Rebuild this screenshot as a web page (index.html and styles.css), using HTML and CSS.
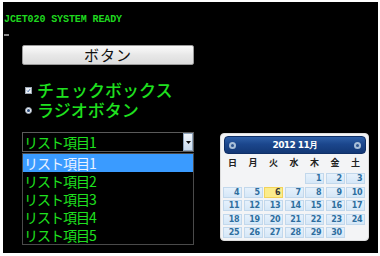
FILE: index.html
```html
<!DOCTYPE html>
<html lang="ja">
<head>
<meta charset="utf-8">
<title>JCET020</title>
<link rel="stylesheet" href="styles.css">
</head>
<body>
<main class="screen">
  <div class="status">JCET020 SYSTEM READY</div>
  <div class="cursor"></div>
  <button class="btn" type="button">ボタン</button>
  <div class="checks">
    <label class="opt">
      <span class="cbox"><svg width="7" height="7" viewBox="0 0 7 7"><path d="M1.5 3.6 L3 5.2 L5.6 1.6" fill="none" stroke="#2a5a9a" stroke-width="1.2"/></svg></span>
      <span class="opt-text">チェックボックス</span>
    </label>
    <label class="opt">
      <span class="rbox"><span class="rdot"></span></span>
      <span class="opt-text">ラジオボタン</span>
    </label>
  </div>
  <div class="lower">
    <div class="combo">
      <div class="select">
        <span class="select-text">リスト項目1</span>
        <span class="select-arrow"><svg width="5" height="3" viewBox="0 0 5 3"><path d="M0 0 H5 L2.5 3 Z" fill="#111"/></svg></span>
      </div>
      <ul class="list">
        <li class="item active">リスト項目1</li>
        <li class="item">リスト項目2</li>
        <li class="item">リスト項目3</li>
        <li class="item">リスト項目4</li>
        <li class="item">リスト項目5</li>
      </ul>
    </div>
    <div class="cal">
      <div class="cal-head">
        <span class="cal-nav"><span class="cal-nav-dot"></span></span>
        <span class="cal-title">2012 11月</span>
        <span class="cal-nav"><span class="cal-nav-dot"></span></span>
      </div>
      <div class="cal-days">
        <span>日</span><span>月</span><span>火</span><span>水</span><span>木</span><span>金</span><span>土</span>
      </div>
      <div class="cal-grid">
        <span class="empty"></span><span class="empty"></span><span class="empty"></span><span class="empty"></span>
        <span class="d">1</span><span class="d">2</span><span class="d">3</span>
        <span class="d">4</span><span class="d">5</span><span class="d today">6</span><span class="d">7</span><span class="d">8</span><span class="d">9</span><span class="d">10</span>
        <span class="d">11</span><span class="d">12</span><span class="d">13</span><span class="d">14</span><span class="d">15</span><span class="d">16</span><span class="d">17</span>
        <span class="d">18</span><span class="d">19</span><span class="d">20</span><span class="d">21</span><span class="d">22</span><span class="d">23</span><span class="d">24</span>
        <span class="d">25</span><span class="d">26</span><span class="d">27</span><span class="d">28</span><span class="d">29</span><span class="d">30</span><span class="empty"></span>
      </div>
    </div>
  </div>
</main>
</body>
</html>
```

FILE: styles.css
```css
html, body {
  margin: 0;
  padding: 0;
  background: #ffffff;
}
body {
  width: 380px;
  height: 256px;
  overflow: hidden;
  font-family: "Noto Sans CJK JP", "Noto Sans", sans-serif;
}
.screen {
  display: block;
  margin: 2px 2px 0 3px;
  height: 251px;
  background: #000000;
  overflow: hidden;
}
.status {
  padding-top: 12px;
  margin-left: 1px;
  height: 12px;
  line-height: 12px;
  font-family: "Liberation Mono", monospace;
  font-weight: bold;
  font-size: 10px;
  color: #1fd81f;
  letter-spacing: -0.1px;
}
.cursor {
  margin: 8px 0 0 1px;
  width: 5px;
  height: 2px;
  background: #8a8a8a;
}
.btn {
  display: block;
  margin: 9px 0 0 19px;
  width: 172px;
  height: 20px;
  box-sizing: border-box;
  padding: 0;
  border: 1px solid #9a9a9a;
  border-radius: 2px;
  background: linear-gradient(#fbfbfb, #e8e8e8 50%, #dcdcdc);
  font-family: "Noto Sans CJK JP", sans-serif;
  font-size: 15px;
  line-height: 18px;
  color: #111;
  letter-spacing: 1px;
}
.checks {
  margin-top: 15px;
  margin-left: 22px;
}
.opt {
  display: flex;
  align-items: center;
  height: 20px;
}
.cbox {
  width: 7px;
  height: 7px;
  box-sizing: border-box;
  border: 1px solid #9aa4b0;
  background: #eef2f8;
  display: flex;
  align-items: center;
  justify-content: center;
  overflow: hidden;
}
.cbox svg { display: block; }
.rbox {
  width: 7px;
  height: 7px;
  box-sizing: border-box;
  border: 1px solid #9aa4b0;
  border-radius: 50%;
  background: #eef2f8;
  display: flex;
  align-items: center;
  justify-content: center;
}
.rdot {
  width: 3px;
  height: 3px;
  border-radius: 50%;
  background: #2a4a7a;
}
.opt-text {
  margin-left: 5px;
  font-size: 17px;
  line-height: 20px;
  color: #1fe01f;
  font-weight: 500;
}
.lower {
  display: flex;
  align-items: flex-start;
  margin-top: 12px;
}
.combo {
  margin-left: 19px;
  width: 172px;
}
.select {
  height: 20px;
  box-sizing: border-box;
  border: 1px solid #5a5a5a;
  background: #000;
  display: flex;
  align-items: center;
  justify-content: space-between;
}
.select-text, .item {
  font-size: 14px;
  letter-spacing: -1px;
  color: #1fe01f;
  padding-left: 1px;
}
.select-text { line-height: 18px; }
.select-arrow {
  width: 10px;
  height: 18px;
  box-sizing: border-box;
  border: 1px solid #8ea4bc;
  background: linear-gradient(#f2f6fb, #c9dcef);
  display: flex;
  align-items: center;
  justify-content: center;
}
.select-arrow svg { display: block; }
.list {
  list-style: none;
  margin: 1px 0 0;
  padding: 0;
  box-sizing: border-box;
  border: 1px solid #4a4a4a;
  background: #000;
}
.item {
  height: 18px;
  line-height: 18px;
}
.item.active {
  background: #3a9bff;
  color: #eaf2ff;
}
.cal {
  margin: 1px 0 0 26px;
  width: 149px;
  box-sizing: border-box;
  padding: 2px;
  border: 1px solid #dcdcdc;
  border-radius: 4px;
  background: #f3f4f6;
}
.cal-head {
  height: 18px;
  margin: 0 0 0 1px;
  width: 142px;
  box-sizing: border-box;
  border-radius: 4px;
  border: 1px solid #0f2f66;
  background: linear-gradient(#2f60a8, #1b468c 45%, #133876);
  display: flex;
  align-items: center;
  justify-content: space-between;
  padding: 0 4px;
}
.cal-nav {
  width: 7px;
  height: 7px;
  border-radius: 50%;
  background: #a9bfd8;
  display: flex;
  align-items: center;
  justify-content: center;
}
.cal-nav-dot {
  width: 3px;
  height: 3px;
  border-radius: 50%;
  background: #2e5590;
}
.cal-title {
  font-family: "DejaVu Sans", sans-serif;
  font-weight: bold;
  font-size: 9px;
  letter-spacing: -0.6px;
  color: #ffffff;
}
.cal-days {
  display: grid;
  grid-template-columns: repeat(7, 19px);
  column-gap: 1.5px;
  height: 17px;
  line-height: 17px;
  margin-bottom: 2px;
}
.cal-days span {
  text-align: center;
  font-size: 9px;
  font-weight: bold;
  color: #222;
}
.cal-grid {
  display: grid;
  grid-template-columns: repeat(7, 19px);
  grid-auto-rows: 11px;
  column-gap: 1.5px;
  row-gap: 2.5px;
}
.d {
  box-sizing: border-box;
  border: 1px solid #c2d8ec;
  background: linear-gradient(#e6f1fc, #d5e7f7);
  font-family: "DejaVu Sans", sans-serif;
  font-weight: bold;
  font-size: 8px;
  letter-spacing: -0.5px;
  line-height: 9px;
  text-align: right;
  padding-right: 2px;
  color: #2e6e9e;
}
.d.today {
  border-color: #f2d35a;
  background: #fbec8c;
  color: #363636;
}
```
